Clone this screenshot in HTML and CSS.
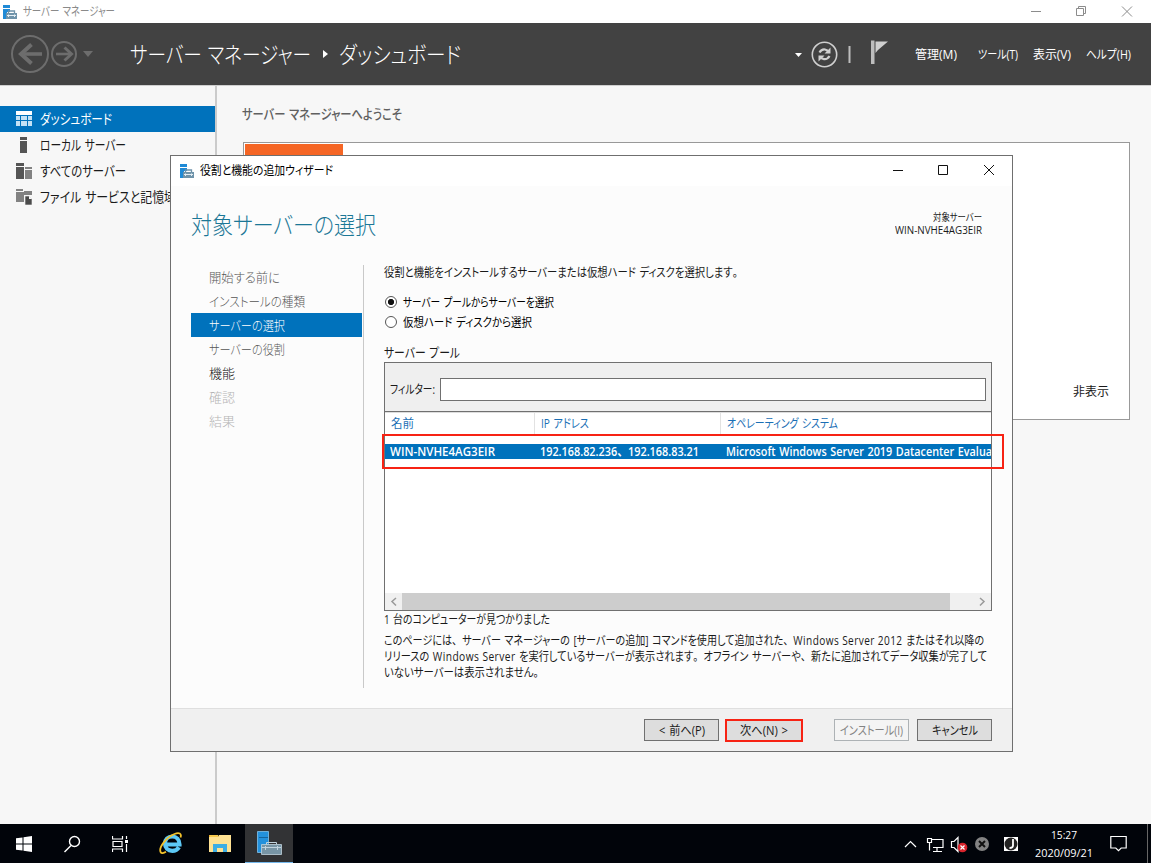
FILE: index.html
```html
<!DOCTYPE html>
<html lang="ja">
  <head>
    <meta charset="utf-8" />
    <title>サーバー マネージャー</title>
    <link rel="stylesheet" href="styles.css">
  </head>
  <body>
    <svg width="0" height="0" class="defs">
      <symbol id="server-icon" viewBox="0 0 14 14">
        <path fill="#1f8ad6" d="M0 0h7v3H0zM0 4h7v3H4v7H0z" />
        <path fill="#6f93aa" d="M3 8h11v6H3z" />
        <path fill="none" stroke="#6f93aa" stroke-width="1.3" d="M5.500 8V6h6v2" />
        <path fill="none" stroke="#e4eef4" d="M4 10.500h9M5.500 9.500v2.500M11.500 9.500v2.500" />
      </symbol>
    </svg>

    <div class="titlebar">
      <svg class="app-icon" width="14" height="14"><use href="#server-icon" /></svg>
      <span class="title-text fit" data-w="92">サーバー マネージャー</span>
      <svg class="window-buttons" width="106" height="22" viewBox="0 0 106 22" fill="none" stroke="#8c8c8c">
        <path d="M1 10.500h10M46.500 7.500h7v7h-7zM48.500 7.500v-2h7v7h-2M92 5.500l10 10M102 5.500l-10 10" />
      </svg>
    </div>

    <div class="header">
      <svg class="history" width="88" height="42" viewBox="0 0 88 42" fill="none" stroke="#6d6d6d">
        <circle cx="20" cy="21" r="18" stroke-width="2" />
        <path stroke-width="3.600" d="M32 21H11" />
        <path stroke-width="4" d="M21.500 11.500L11 21l10.500 9.500" />
        <circle cx="54" cy="21" r="12" stroke-width="2" />
        <path stroke-width="2.600" d="M46 21h15" />
        <path stroke-width="3" d="M54.500 14.500l7 6.500-7 6.500" />
        <path fill="#6d6d6d" stroke="none" d="M73 18h10l-5 6z" />
      </svg>
      <div class="crumbs">
        <span class="fit" data-w="181">サーバー マネージャー</span>
        <svg width="6" height="8"><path fill="#fff" d="M0 0l5 4-5 4z" /></svg>
        <span class="fit" data-w="122">ダッシュボード</span>
      </div>
      <svg class="tools" width="96" height="40" viewBox="0 0 96 40">
        <path fill="#fff" d="M0 19h7l-3.500 4z" />
        <circle cx="29.500" cy="20.500" r="12.200" fill="none" stroke="#cfcfcf" stroke-width="1.600" />
        <path fill="none" stroke="#d0d0d0" stroke-width="2.200" d="M24.500 18.500q2-3.500 5.500-3 2.500 .5 3.500 2.500M34.500 22q-2 3.500-5.500 3.200-2.500-.5-3.700-2.500" />
        <path fill="#d0d0d0" d="M35.500 13.500v6h-6zM23.500 27.500v-6h6z" />
        <path fill="#bdbdbd" d="M53.500 12h2v17h-2zM76 6.500h3.500V30H76z" />
        <path fill="#cfcfcf" d="M80.500 7.500h12.500l-10 8.500-2.500 3z" />
      </svg>
      <div class="menu">
        <span class="fit" data-w="42">管理(M)</span>
        <span class="fit" data-w="40">ツール(T)</span>
        <span class="fit" data-w="38">表示(V)</span>
        <span class="fit" data-w="45">ヘルプ(H)</span>
      </div>
    </div>

    <div class="workspace">
      <div class="sidebar">
        <div class="side-item active">
          <svg width="16" height="16"><path fill="#fff" d="M0 0h16v4H0z" /><path fill="#c4e2f5" d="M0 5h4v4H0zM5 5h6v4H5zM12 5h4v4h-4zM0 10h4v5H0zM5 10h6v5H5zM12 10h4v5h-4z" /></svg>
          <span class="fit" data-w="72">ダッシュボード</span>
        </div>
        <div class="side-item">
          <svg width="16" height="16" fill="#555"><path d="M4 0h7v3H4zM4 4h7v12H4z" /></svg>
          <span class="fit" data-w="86">ローカル サーバー</span>
        </div>
        <div class="side-item">
          <svg width="16" height="16"><path fill="#555" d="M0 0h8v3H0zM0 4h8v12H0z" /><path fill="#828282" d="M9 4h7v2H9zM9 7h7v9H9z" /></svg>
          <span class="fit" data-w="86">すべてのサーバー</span>
        </div>
        <div class="side-item">
          <svg width="16" height="16"><path fill="#828282" d="M0 0h7v2H0zM0 3h8V2h8v4H8v7H0z" /><path fill="#4b4b4b" stroke="#f7f7f7" stroke-width=".6" d="M9 7h4l3 3v6H9z" /><path fill="#f7f7f7" d="M13 7v3h3z" /></svg>
          <span class="fit" data-w="136">ファイル サービスと記憶域</span>
        </div>
      </div>
      <div class="main">
        <h2 class="welcome"><span class="fit" data-w="160">サーバー マネージャーへようこそ</span></h2>
        <div class="welcome-panel">
          <div class="orange-tile"></div>
          <span class="hide-link fit" data-w="36">非表示</span>
        </div>
      </div>
    </div>

    <div class="dialog">
      <div class="dialog-title">
        <svg class="app-icon" width="14" height="14"><use href="#server-icon" /></svg>
        <span class="fit" data-w="133">役割と機能の追加ウィザード</span>
        <svg class="window-buttons" width="106" height="22" viewBox="0 0 106 22" fill="none" stroke="#111">
          <path d="M1 10.500h10M46.500 5.500h9v9h-9zM92 5l10 10M102 5l-10 10" />
        </svg>
      </div>

      <div class="dialog-head">
        <h1><span class="fit" data-w="185">対象サーバーの選択</span></h1>
        <div class="target">
          <span class="fit" data-w="49">対象サーバー</span>
          <span class="fit" data-w="87">WIN-NVHE4AG3EIR</span>
        </div>
      </div>

      <div class="dialog-body">
        <div class="steps">
          <div class="step"><span class="fit" data-w="71">開始する前に</span></div>
          <div class="step"><span class="fit" data-w="96">インストールの種類</span></div>
          <div class="step current"><span class="fit" data-w="76">サーバーの選択</span></div>
          <div class="step"><span class="fit" data-w="76">サーバーの役割</span></div>
          <div class="step dark"><span class="fit" data-w="26">機能</span></div>
          <div class="step disabled"><span class="fit" data-w="26">確認</span></div>
          <div class="step disabled"><span class="fit" data-w="26">結果</span></div>
        </div>

        <div class="content">
          <p class="intro"><span class="fit" data-w="359">役割と機能をインストールするサーバーまたは仮想ハード ディスクを選択します<span class="wide">。</span></span></p>
          <div class="radio">
            <i class="dot checked"></i><span class="fit" data-w="151">サーバー プールからサーバーを選択</span>
          </div>
          <div class="radio">
            <i class="dot"></i><span class="fit" data-w="129">仮想ハード ディスクから選択</span>
          </div>
          <p class="pool-label"><span class="fit" data-w="76">サーバー プール</span></p>

          <div class="pool">
            <div class="filter">
              <span class="fit" data-w="45">フィルター:</span>
              <div class="filter-input"></div>
            </div>
            <div class="row columns">
              <div><span class="fit" data-w="23">名前</span></div>
              <div><span class="fit" data-w="48">IP アドレス</span></div>
              <div><span class="fit" data-w="111">オペレーティング システム</span></div>
            </div>
            <div class="row selected">
              <div><span class="fit" data-w="105">WIN-NVHE4AG3EIR</span></div>
              <div><span class="fit" data-w="159">192.168.82.236<span class="wide">、</span>192.168.83.21</span></div>
              <div><span class="fit" data-w="266">Microsoft Windows Server 2019 Datacenter Evalua</span></div>
            </div>
            <div class="scrollbar">
              <svg width="17" height="17" fill="none" stroke="#999" stroke-width="1.500"><path d="M11 5L7 8.500l4 4" /></svg>
              <div class="thumb"></div>
              <svg width="17" height="17" fill="none" stroke="#999" stroke-width="1.500"><path d="M6 5l4 3.500-4 4" /></svg>
            </div>
            <div class="highlight"></div>
          </div>

          <p class="found"><span class="fit" data-w="166">1 台のコンピューターが見つかりました</span></p>
          <p class="note">
            <span class="fit" data-w="600">このページには<span class="wide">、</span>サーバー マネージャーの [サーバーの追加] コマンドを使用して追加された<span class="wide">、</span><span class="latin">Windows Server 2012</span> またはそれ以降の</span>
            <span class="fit" data-w="603">リリースの <span class="latin">Windows Server</span> を実行しているサーバーが表示されます<span class="wide">。</span>オフライン サーバーや<span class="wide">、</span>新たに追加されてデータ収集が完了して</span>
            <span class="fit" data-w="160">いないサーバーは表示されません<span class="wide">。</span></span>
          </p>
        </div>
      </div>

      <div class="dialog-footer">
        <div class="btn"><span class="fit" data-w="46">&lt; 前へ(P)</span></div>
        <div class="btn next"><span class="fit" data-w="48">次へ(N) &gt;</span></div>
        <div class="btn off"><span class="fit" data-w="63">インストール(I)</span></div>
        <div class="btn"><span class="fit" data-w="46">キャンセル</span></div>
      </div>
    </div>

    <div class="taskbar">
      <div class="task"><svg width="16" height="16" fill="#fff"><path d="M0 2.300l6.500-.9v6.100H0zM7.500 1.200L16 0v7.500H7.500zM0 8.500h6.500v6.100L0 13.700zM7.500 8.500H16V16l-8.500-1.200z" /></svg></div>
      <div class="task"><svg width="18" height="18" fill="none" stroke="#fff" stroke-width="1.400"><circle cx="11.500" cy="6.500" r="5" /><path d="M8 10.500L1.500 17" /></svg></div>
      <div class="task"><svg width="17" height="16" fill="none" stroke="#fff"><path stroke-width="1.200" d="M.5 0v3h10V0M1 5.500h9v5H1zM.5 16v-3h10v3M14.500 0v3M14.500 8v8" /><path fill="#fff" stroke="none" d="M13 4h3v3h-3z" /></svg></div>
      <div class="task ie">
        <svg width="24" height="24" viewBox="0 0 24 24" fill="none">
          <path stroke="#5dc9f6" stroke-width="4.200" d="M6 12.500h14.500c0-5-3.200-8-7.300-8-4.200 0-7.200 3-7.200 7 0 4.300 3 7.300 7.300 7.300 3 0 5.300-1.300 6.600-3.600" />
          <path stroke="#f3c22b" stroke-width="1.800" d="M21.500 5.500c1.500-4-1.500-5.500-6-3.500C7 5.500-.5 15.500 1.600 20c.8 1.600 3 1.200 5.400-.2" />
        </svg>
      </div>
      <div class="task">
        <svg width="22" height="19"><path fill="#e9ad2c" d="M0 1h9l1 3H0z" /><path fill="#ffe293" d="M0 3h9l1-2h12v17H0z" /><path fill="#f6c94f" d="M1 1h8v2H1z" /><path fill="#3daee4" d="M4 10h14v8h-4v-4H8v4H4z" /></svg>
      </div>
      <div class="task open">
        <svg width="25" height="25"><path fill="#2391dc" stroke="#82c3ee" stroke-width=".8" d="M.5 .5h11v21H.5z" /><path stroke="#14639c" d="M2 6.500h9" /><path fill="#7895a5" stroke="#c2d4de" stroke-width=".8" d="M4.500 13.500h20v10h-20z" /><path fill="none" stroke="#c2d4de" d="M9.500 13.500v-2h10v2M5 16.500h19M8.500 15v4M20.500 15v4" /></svg>
      </div>
      <div class="tray">
        <svg width="116" height="24" viewBox="0 0 116 24" fill="none" stroke="#fff" stroke-width="1.200">
          <path d="M1 15l5.500-5.500L12 15" />
          <path d="M27 7.500h12v8H29M33 15.500v4M29 19.500h9M23.500 6.500h4v4h-4zM25.500 10.500v8" />
          <path d="M47.500 9.500h2.500l4-4v14l-4-4h-2.500z" />
          <circle cx="58.500" cy="15.500" r="4.800" fill="#d9242c" stroke="none" />
          <path d="M56.500 13.500l4 4M60.500 13.500l-4 4" />
          <circle cx="78" cy="12" r="7" fill="#838383" stroke="none" />
          <path stroke="#111" stroke-width="2" d="M75 9l6 6M81 9l-6 6" />
          <path fill="#fff" stroke="none" d="M100 5h14v14h-14z" />
          <circle cx="107" cy="12" r="6.500" fill="#222" stroke="none" />
          <path stroke-width="1.800" d="M109 7v6.500q0 2.500-3.500 2.500" />
        </svg>
        <div class="clock">
          <span class="fit" data-w="26">15:27</span>
          <span class="fit" data-w="58">2020/09/21</span>
        </div>
        <svg class="notice" width="17" height="17" fill="none" stroke="#fff" stroke-width="1.200"><path d="M.8 1.500h15.400v11.500h-5l-2.700 2.700-2.700-2.700h-5z" /></svg>
      </div>
    </div>

    <script src="fit.js"></script>
  </body>
</html>
```
FILE: styles.css
```css
* {
  box-sizing: border-box;
}

body {
  margin: 0;
  width: 1151px;
  height: 863px;
  overflow: hidden;
  display: flex;
  flex-direction: column;
  position: relative;
  font-family: "Open Sans", "Noto Sans CJK JP", sans-serif;
  font-size: 12px;
  line-height: 16px;
  color: #1a1a1a;
  background-color: #f7f7f7;
}
h1,
h2,
p {
  margin: 0;
  font-weight: normal;
}
svg {
  display: block;
  flex: none;
}
.defs {
  position: absolute;
}

/* labels are squeezed to their UI width by fit.js */
.fit {
  display: block;
  flex: none;
  white-space: nowrap;
  transform-origin: 0 50%;
  font-feature-settings: "palt";
  word-spacing: 1px;
}
/* full stops and commas keep their trailing space */
.wide {
  font-feature-settings: normal;
}
.latin {
  letter-spacing: 0.5px;
  word-spacing: 0;
}

.titlebar {
  height: 23px;
  display: flex;
  align-items: center;
  padding: 0 15px 0 3px;
  background-color: #fff;
  color: #8a8a8a;
}
.title-text {
  margin-left: 6px;
}
.window-buttons {
  margin-left: auto;
}

.header {
  height: 63px;
  display: flex;
  align-items: center;
  padding: 0 20px 0 10px;
  background-color: #424242;
  border-bottom: 1px solid #cfcfcf;
  color: #fff;
}
.crumbs {
  display: flex;
  align-items: center;
  margin-left: 32px;
  font-size: 23px;
  font-weight: 300;
  line-height: 30px;
}
.crumbs svg {
  margin: 0 10px 0 12px;
}
.tools {
  margin-left: auto;
  margin-right: 24px;
}
.menu {
  display: flex;
  padding-top: 2px;
}
.menu span + span {
  margin-left: 15px;
}
.menu span:nth-child(2) {
  margin-left: 21px;
}

.workspace {
  flex: 1;
  display: flex;
}
.sidebar {
  width: 217px;
  padding-top: 20px;
  border-right: 2px solid #cbcbcb;
}
.side-item {
  height: 26px;
  display: flex;
  align-items: center;
  padding-left: 16px;
  font-size: 14px;
}
.side-item span {
  margin-left: 8px;
}
.side-item.active {
  background-color: #0072bc;
  color: #fff;
}
.main {
  padding: 20px 21px 0 25px;
  flex: 1;
}
.welcome {
  color: #606060;
  font-size: 14px;
  font-weight: 500;
}
.welcome-panel {
  display: flex;
  justify-content: space-between;
  align-items: flex-start;
  width: 887px;
  height: 278px;
  margin: 20px 0 0 1px;
  padding: 1px 20px 0 1px;
  border: 1px solid #999;
  background-color: #fff;
}
.orange-tile {
  width: 98px;
  height: 60px;
  background-color: #f56625;
}
.hide-link {
  margin-top: 240px;
}

.dialog {
  position: absolute;
  left: 170px;
  top: 155px;
  width: 843px;
  height: 597px;
  display: flex;
  flex-direction: column;
  border: 1px solid #6f6f6f;
  background-color: #fcfcfc;
}
.dialog-title {
  height: 30px;
  display: flex;
  align-items: center;
  gap: 6px;
  padding: 0 14px 0 9px;
  background-color: #fff;
  color: #000;
}
.dialog-head {
  height: 79px;
  display: flex;
  justify-content: space-between;
  padding: 22px 30px 0 20px;
}
.dialog-head h1 {
  color: #1b7796;
  font-size: 24px;
  font-weight: 300;
  line-height: 34px;
}
.target {
  display: flex;
  flex-direction: column;
  align-items: flex-end;
  font-size: 10px;
  line-height: 13px;
  padding-top: 3px;
}
.dialog-body {
  flex: 1;
  display: flex;
  padding-left: 20px;
}
.steps {
  width: 173px;
  height: 423px;
  padding-right: 1px;
  border-right: 1px solid #c9c9c9;
}
.step {
  height: 24px;
  padding: 4px 0 0 18px;
  font-size: 13px;
  font-weight: 300;
  color: #555;
}
.step.current {
  background-color: #0072bc;
  color: #fff;
}
.step.dark {
  color: #111;
}
.step.disabled {
  color: #b4b4b4;
}

.content {
  width: 608px;
  margin-left: 20px;
}
.intro {
  margin-bottom: 11px;
}
.radio {
  height: 20px;
  display: flex;
  align-items: center;
  gap: 6px;
  padding-left: 1px;
  color: #000;
}
.radio span {
  padding-top: 1px;
}
.dot {
  width: 12px;
  height: 12px;
  border: 1px solid #555;
  border-radius: 50%;
  background-color: #fff;
}
.dot.checked {
  background-image: radial-gradient(circle, #111 2.8px, transparent 3.300px);
}
.pool-label {
  margin-top: 12px;
  font-size: 13px;
  height: 18px;
}
.pool {
  position: relative;
  height: 249px;
  display: flex;
  flex-direction: column;
  border: 1px solid #707070;
  background-color: #fff;
}
.filter {
  height: 49px;
  display: flex;
  align-items: center;
  gap: 5px;
  padding: 5px 5px 0;
  background-color: #efefef;
  border-bottom: 1px solid #707070;
}
.filter-input {
  flex: 1;
  height: 23px;
  border: 1px solid #707070;
  background-color: #fff;
}
.row {
  display: grid;
  grid-template-columns: 150px 186px 270px;
  overflow: hidden;
}
.columns {
  height: 22px;
  color: #1a6fb5;
  border-top: 1px solid #ddd;
}
.columns div {
  padding: 3px 0 0 6px;
  border-right: 1px solid #e2e2e2;
}
.columns div:last-child {
  border-right: none;
}
.selected {
  height: 15px;
  margin-top: 10px;
  line-height: 15px;
  background-color: #0072bc;
  color: #fff;
}
.selected div {
  padding-left: 5px;
  font-weight: 600;
}
.scrollbar {
  height: 17px;
  margin-top: auto;
  display: flex;
  background-color: #f0f0f0;
}
.thumb {
  width: 548px;
  margin-right: 24px;
  background-color: #cdcdcd;
}
.highlight {
  position: absolute;
  left: -3px;
  top: 71px;
  width: 622px;
  height: 35px;
  border: 2px solid #f72314;
}
.found {
  margin-top: 1px;
}
.note {
  margin-top: 5px;
}

.dialog-footer {
  height: 43px;
  display: flex;
  justify-content: flex-end;
  align-items: flex-start;
  padding: 10px 20px 0;
  border-top: 1px solid #dfdfdf;
  background-color: #f0f0f0;
}
.btn {
  width: 75px;
  height: 22px;
  padding-top: 1px;
  margin-left: 8px;
  display: flex;
  align-items: center;
  justify-content: center;
  border: 1px solid #707070;
  background-color: #ddd;
}
.btn.next {
  width: 78px;
  height: 23px;
  margin: 0 23px 0 6px;
  border: 2px solid #f72314;
}
.btn.off {
  border-color: #adb2b5;
  background-color: #f4f4f4;
  color: #838383;
}

.taskbar {
  height: 39px;
  display: flex;
  background-color: #01040a;
  color: #fff;
}
.task {
  width: 48px;
  display: flex;
  align-items: center;
  justify-content: center;
}
.task.ie {
  width: 52px;
  padding-left: 2px;
}
.task.open {
  margin-left: 1px;
  background-color: #323335;
  border-bottom: 1px solid #76b9ed;
}
.tray {
  flex: 1;
  display: flex;
  justify-content: flex-end;
  align-items: center;
  margin-right: 3px;
  padding-right: 20px;
  border-right: 1px solid #666;
}
.clock {
  width: 70px;
  margin: 0 11px 0 9px;
  display: flex;
  flex-direction: column;
  align-items: center;
  font-size: 11px;
  line-height: 18px;
}
```
FILE: fit.js
```js
// set every label to the width given in data-w
document.querySelectorAll(".fit").forEach(function (el) {
  const range = document.createRange();
  range.selectNodeContents(el);
  const natural = range.getBoundingClientRect().width;
  const width = Number(el.dataset.w);
  el.style.width = width + "px";
  el.style.transform = "scaleX(" + width / natural + ")";
});
```
